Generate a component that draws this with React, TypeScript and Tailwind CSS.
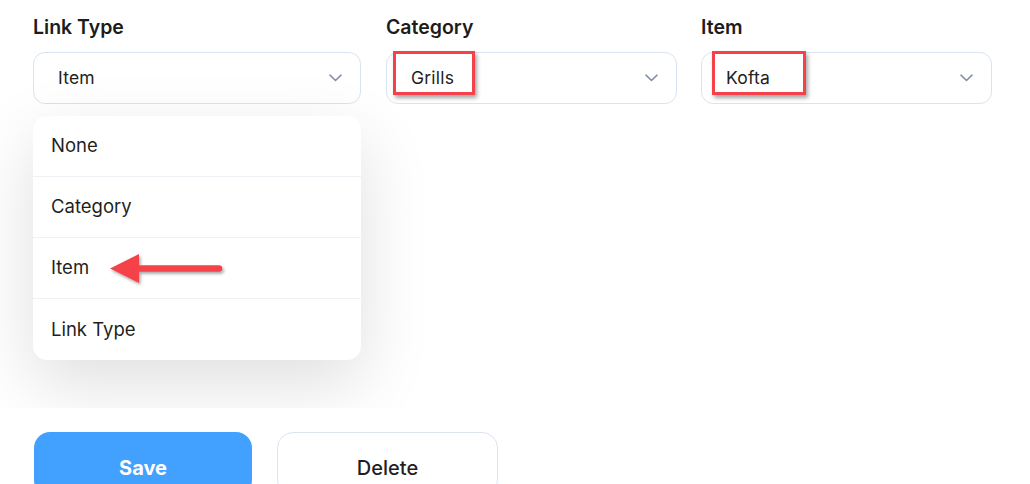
import React from "react";

const Chevron = () => (
  <svg width="13" height="8" viewBox="0 0 13 8" fill="none">
    <path d="M1 1.2L6.5 6.5L12 1.2" stroke="#8492a6" strokeWidth="1.6" strokeLinecap="round" strokeLinejoin="round" />
  </svg>
);

function Select({ value, widthClass, children }: { value: string; widthClass: string; children?: React.ReactNode }) {
  return (
    <div className={`relative ${widthClass} h-[52px] rounded-[12px] border border-[#d9e4f0] bg-white flex items-center justify-between pl-[24px] pr-[18px]`}>
      <span className="text-[17.5px] text-[#222] leading-none tracking-[0.2px]">{value}</span>
      <Chevron />
      {children}
    </div>
  );
}

export default function App() {
  const font = { fontFamily: "Inter, 'Noto Sans', sans-serif" };
  return (
    <div className="w-[1030px] h-[484px] bg-white overflow-hidden" style={font}>
      <div className="h-[408px] overflow-hidden pt-[15px] pl-[33px]">
        <div className="flex gap-[25px]">
          <div className="flex flex-col w-[328px]">
            <div className="text-[19.5px] leading-[24px] font-semibold text-[#1c1c1c]">Link Type</div>
            <div className="mt-[13px]">
              <Select value="Item" widthClass="w-[328px]" />
            </div>
            <div className="relative mt-[12px] w-[328px] rounded-[14px] bg-white shadow-[0_24px_70px_rgba(0,0,0,0.13)]">
              {["None", "Category", "Item", "Link Type"].map((t, i) => (
                <div
                  key={t}
                  className={`h-[61px] flex items-center pl-[18px] text-[18.5px] text-[#1f1f1f] ${i < 3 ? "border-b border-[#eef2f7]" : ""}`}
                >
                  {t}
                </div>
              ))}
              <svg className="absolute left-[74px] top-[135px]" width="120" height="40" viewBox="0 0 120 40" fill="none">
                <defs>
                  <filter id="ds" x="-20%" y="-40%" width="140%" height="180%">
                    <feDropShadow dx="1.5" dy="2" stdDeviation="1.6" floodColor="#000" floodOpacity="0.35" />
                  </filter>
                </defs>
                <g filter="url(#ds)">
                  <path d="M3 17.5 L32 3 L32 32 Z" fill="#f5424a" />
                  <path d="M30 17.5 L112 17.5" stroke="#f5424a" strokeWidth="6.5" strokeLinecap="round" />
                </g>
              </svg>
            </div>
          </div>
          <div className="flex flex-col w-[291px]">
            <div className="text-[19.5px] leading-[24px] font-semibold text-[#1c1c1c]">Category</div>
            <div className="mt-[13px]">
              <Select value="Grills" widthClass="w-[291px]">
                <div className="absolute left-[6px] top-[-2px] w-[82px] h-[44px] border-[3px] border-[#f5424a] shadow-[2px_3px_4px_rgba(0,0,0,0.35)]" />
              </Select>
            </div>
          </div>
          <div className="flex flex-col w-[291px] ml-[-1px]">
            <div className="text-[19.5px] leading-[24px] font-semibold text-[#1c1c1c]">Item</div>
            <div className="mt-[13px]">
              <Select value="Kofta" widthClass="w-[291px]">
                <div className="absolute left-[10px] top-[-2px] w-[94px] h-[44px] border-[3px] border-[#f5424a] shadow-[2px_3px_4px_rgba(0,0,0,0.35)]" />
              </Select>
            </div>
          </div>
        </div>
      </div>
      <div className="flex gap-[25px] pl-[34px] mt-[24px]">
        <div className="w-[218px] h-[64px] rounded-[16px] bg-[#42a0ff] flex items-start justify-center pt-[26px]">
          <span className="text-white text-[20px] font-bold leading-none">Save</span>
        </div>
        <div className="w-[221px] h-[64px] rounded-[16px] border border-[#dbe5f0] bg-white flex items-start justify-center pt-[25px]">
          <span className="text-[#1f1f1f] text-[20px] font-medium leading-none">Delete</span>
        </div>
      </div>
    </div>
  );
}
